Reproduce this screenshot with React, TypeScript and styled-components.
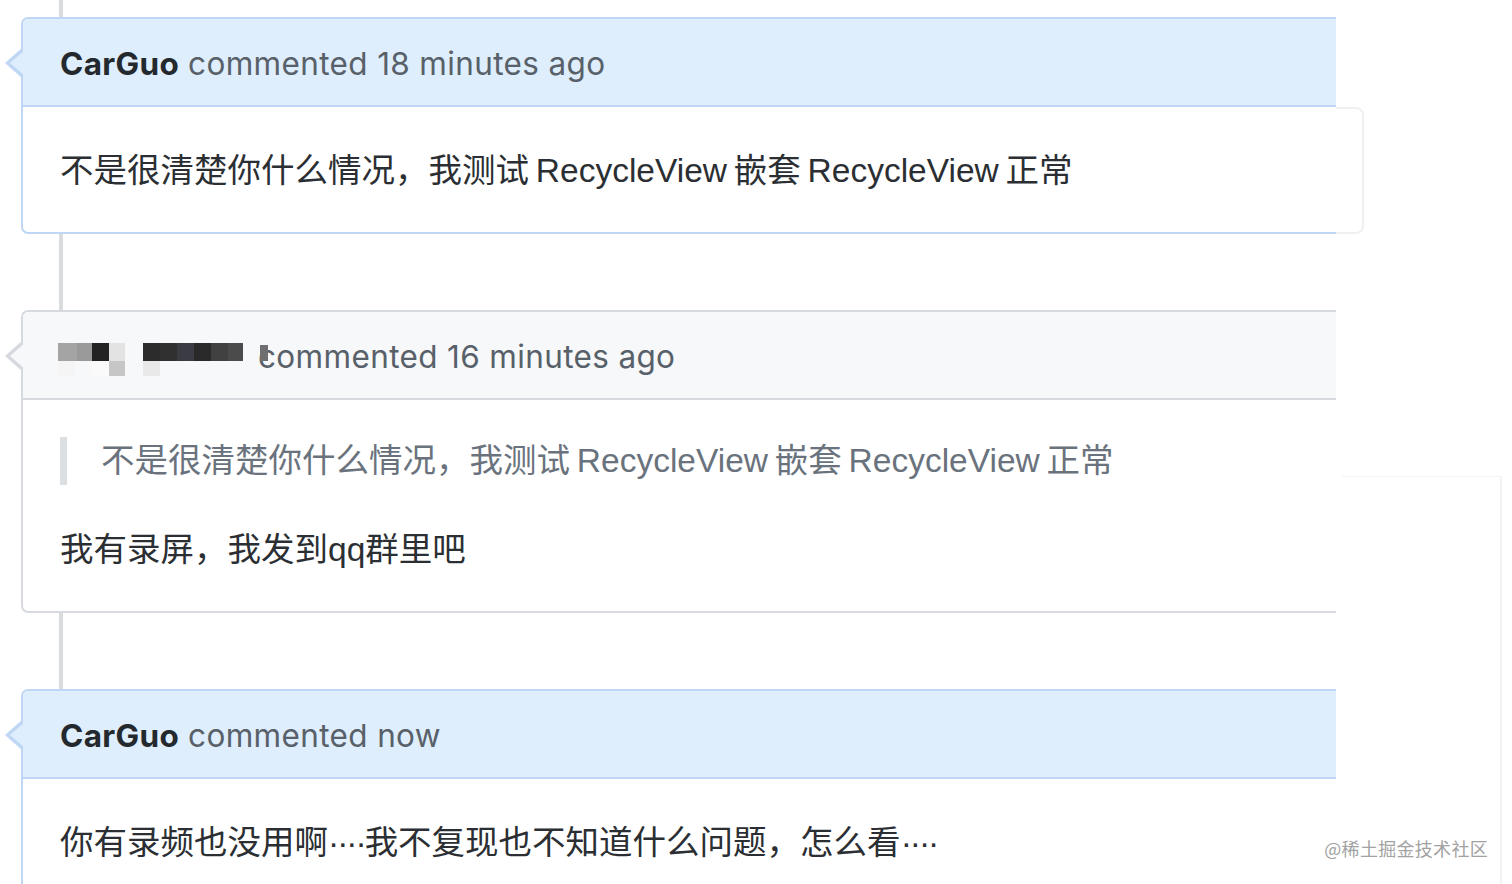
import React from 'react';
import styled, { createGlobalStyle, css } from 'styled-components';

const GlobalStyle = createGlobalStyle`
  html, body {
    margin: 0;
    padding: 0;
    background: #fff;
  }
  body {
    font-family: Inter, "Noto Sans CJK SC", sans-serif;
    -webkit-font-smoothing: antialiased;
  }
`;

type Tone = 'blue' | 'gray';

const tones = {
  blue: { bg: '#deeefd', border: '#bfd7f4' },
  gray: { bg: '#f6f8fa', border: '#d6dadf' },
};

const Page = styled.div`
  position: relative;
  display: flex;
  width: 1512px;
  height: 884px;
  overflow: hidden;
  background: #fff;
`;

const Timeline = styled.div`
  flex: none;
  width: 1336px;
  display: flex;
  flex-direction: column;
  gap: 76px;
  padding-top: 17px;
  background: linear-gradient(
    to right,
    transparent 59px,
    #d9dcdf 59px,
    #d9dcdf 63px,
    transparent 63px
  );
`;

const Box = styled.div<{ $tone: Tone }>`
  position: relative;
  margin-left: 21px;
  background: #fff;
  border: 2px solid ${(p) => tones[p.$tone].border};
  border-right: none;
  border-radius: 7px 0 0 7px;

  &::before,
  &::after {
    content: '';
    position: absolute;
    right: 100%;
    width: 0;
    height: 0;
    border-style: solid;
    border-color: transparent;
  }
  &::before {
    top: 28px;
    border-width: 16px 18px 16px 0;
    border-right-color: ${(p) => tones[p.$tone].border};
  }
  &::after {
    top: 31px;
    margin-right: -2px;
    border-width: 13px 15px 13px 0;
    border-right-color: ${(p) => tones[p.$tone].bg};
  }
`;

const Header = styled.div<{ $tone: Tone }>`
  display: flex;
  align-items: center;
  box-sizing: border-box;
  height: 88px;
  padding: 2px 37px 0;
  background: ${(p) => tones[p.$tone].bg};
  border-bottom: 2px solid ${(p) => tones[p.$tone].border};
  border-radius: 5px 0 0 0;
  font-size: 31.5px;
  letter-spacing: 0.35px;
  color: #586069;
  white-space: nowrap;
`;

const Author = styled.strong`
  font-weight: 700;
  color: #24292e;
  margin-right: 9px;
`;

const Mosaic = styled.svg`
  position: relative;
  z-index: 1;
  flex: none;
  margin: 8px -10px 0 -2px;
`;

const Body = styled.div<{ $ghost?: boolean }>`
  position: relative;
  padding: 39px 37px 36px;
  font-family: "Liberation Sans", "Noto Sans CJK SC", sans-serif;
  font-size: 33.5px;
  line-height: 50px;
  word-spacing: -2.5px;
  color: #2b2f33;
  white-space: nowrap;

  ${(p) =>
    p.$ghost &&
    css`
      &::after {
        content: '';
        position: absolute;
        top: 0;
        right: -28px;
        bottom: -2px;
        width: 26px;
        border: 2px solid #eef0f2;
        border-left: none;
        border-radius: 0 8px 8px 0;
      }
    `}
`;

const Para = styled.p`
  margin: 0;
`;

const Dots = styled.span`
  letter-spacing: -2px;
`;

const Quote = styled.blockquote`
  margin: -2px 0 40px;
  padding-left: 34px;
  border-left: 7px solid #dcdfe2;
  line-height: 48px;
  color: #6a737d;
`;

const SidePanel = styled.div`
  flex: 1;
  display: flex;
  flex-direction: column;
  padding-top: 476px;
`;

const SideRule = styled.div`
  margin-left: 6px;
  margin-right: 10px;
  height: 1px;
  background: #f2f3f5;
`;

const SideColumn = styled.div`
  flex: 1;
  align-self: flex-end;
  width: 2px;
  margin-right: 10px;
  background: #f1f2f4;
`;

const Watermark = styled.div`
  position: absolute;
  right: 24px;
  top: 835px;
  font-family: "Noto Sans CJK SC", sans-serif;
  font-size: 18px;
  color: #a2a2a2;
  text-shadow: 0 0 1px #fff;
  letter-spacing: 0.3px;
`;

const cells: [number, number, number, number, string][] = [
  [0, 0, 19, 18, '#a4a4a4'],
  [19, 0, 15, 18, '#9a9a9a'],
  [34, 0, 17, 18, '#232323'],
  [51, 0, 16, 18, '#e3e3e3'],
  [85, 0, 17, 18, '#2c2c2c'],
  [102, 0, 17, 18, '#303030'],
  [119, 0, 17, 18, '#3b3b44'],
  [136, 0, 17, 18, '#2a2a2a'],
  [153, 0, 17, 18, '#414141'],
  [170, 0, 15, 18, '#4b4b4b'],
  [202, 2, 8, 16, '#6f6f6f'],
  [0, 18, 17, 15, '#f5f5f5'],
  [34, 18, 17, 15, '#fafafa'],
  [51, 18, 16, 15, '#c6c6c6'],
  [85, 18, 17, 15, '#e9e9e9'],
];

const BlurredName = () => (
  <Mosaic width="210" height="34" viewBox="0 0 210 34">
    {cells.map(([x, y, w, h, fill], i) => (
      <rect key={i} x={x} y={y} width={w} height={h} fill={fill} />
    ))}
  </Mosaic>
);

const App = () => {
  const reply = '不是很清楚你什么情况，我测试 RecycleView 嵌套 RecycleView 正常';

  return (
    <>
      <GlobalStyle />
      <Page>
        <Timeline>
          <Box $tone="blue">
            <Header $tone="blue">
              <Author>CarGuo</Author>
              commented 18 minutes ago
            </Header>
            <Body $ghost>
              <Para>{reply}</Para>
            </Body>
          </Box>

          <Box $tone="gray">
            <Header $tone="gray">
              <BlurredName />
              commented 16 minutes ago
            </Header>
            <Body>
              <Quote>{reply}</Quote>
              <Para>我有录屏，我发到qq群里吧</Para>
            </Body>
          </Box>

          <Box $tone="blue">
            <Header $tone="blue">
              <Author>CarGuo</Author>
              commented now
            </Header>
            <Body>
              <Para>
                你有录频也没用啊<Dots>····</Dots>我不复现也不知道什么问题，怎么看<Dots>····</Dots>
              </Para>
            </Body>
          </Box>
        </Timeline>
        <SidePanel>
          <SideRule />
          <SideColumn />
        </SidePanel>
        <Watermark>@稀土掘金技术社区</Watermark>
      </Page>
    </>
  );
};

export default App;
